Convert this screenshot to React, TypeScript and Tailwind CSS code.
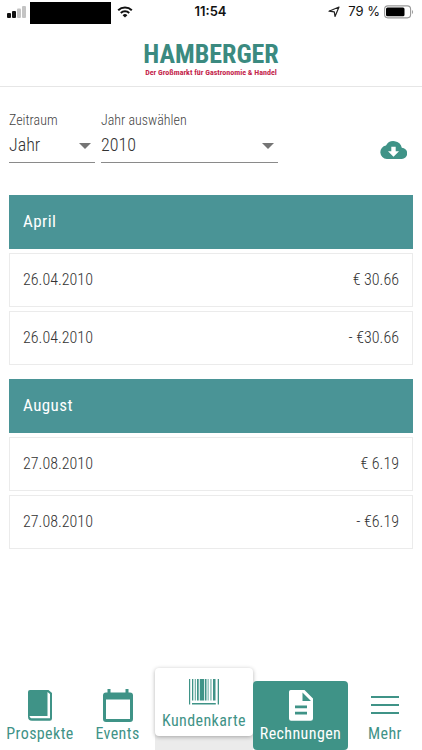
import React from 'react';

type Invoice = { date: string; amount: string };
type Month = { name: string; invoices: Invoice[] };

const MONTHS: Month[] = [
  {
    name: 'April',
    invoices: [
      { date: '26.04.2010', amount: '€ 30.66' },
      { date: '26.04.2010', amount: '- €30.66' },
    ],
  },
  {
    name: 'August',
    invoices: [
      { date: '27.08.2010', amount: '€ 6.19' },
      { date: '27.08.2010', amount: '- €6.19' },
    ],
  },
];

const SignalIcon = () => (
  <svg width="20" height="12" viewBox="0 0 20 12" aria-hidden="true">
    <rect x="0" y="7" width="4" height="5" rx="1" fill="#111" />
    <rect x="5" y="5" width="4" height="7" rx="1" fill="#111" />
    <rect x="10" y="2.500" width="4" height="9.500" rx="1" fill="#c4c4c4" />
    <rect x="15" y="0" width="4" height="12" rx="1" fill="#c4c4c4" />
  </svg>
);

const WifiIcon = () => (
  <svg width="16" height="12" viewBox="0 0 16 12" aria-hidden="true">
    <path d="M1.200 4.300a9.800 9.800 0 0 1 13.600 0" fill="none" stroke="#111" strokeWidth="2" />
    <path d="M3.800 7a6 6 0 0 1 8.400 0" fill="none" stroke="#111" strokeWidth="2" />
    <path d="M8 11.600 5.600 9.200a3.400 3.400 0 0 1 4.800 0z" fill="#111" />
  </svg>
);

const LocationIcon = () => (
  <svg width="12" height="12" viewBox="0 0 12 12" aria-hidden="true">
    <path d="M11 1 7 10.500 6.300 5.800 1 5.200z" fill="none" stroke="#222" strokeWidth="1.200" strokeLinejoin="round" />
  </svg>
);

const BatteryIcon = () => (
  <svg width="30" height="14" viewBox="0 0 30 14" aria-hidden="true">
    <rect x="0.600" y="0.900" width="26" height="12" rx="3.300" fill="none" stroke="#999" strokeWidth="1.100" />
    <rect x="2" y="2.500" width="18.500" height="8.800" rx="1.500" fill="#000" />
    <path d="M28 5v4c1.400-.6 1.400-3.400 0-4z" fill="#999" />
  </svg>
);

const CloudDownloadIcon = () => (
  <svg width="27" height="18" viewBox="0 0 27 18" aria-hidden="true">
    <path
      d="M21.800 6.800A8.500 8.500 0 0 0 6 4.500 6.800 6.800 0 0 0 6.800 18h14.600a5.600 5.600 0 0 0 .4-11.200z"
      fill="#3f9387"
    />
    <path d="M11.300 5.800h4.400v4.400H19l-5.500 5.500L8 10.200h3.300z" fill="#fff" />
  </svg>
);

const BookIcon = () => (
  <svg width="24" height="31" viewBox="0 0 24 31" aria-hidden="true">
    <path
      d="M2 0h18.500l3.500 3v25.500a2.200 2.200 0 0 1-2.200 2.200H4A4 4 0 0 1 0 26.700V2a2 2 0 0 1 2-2z"
      fill="#3f9387"
    />
    <path d="M19.500 2 22 4v24.300H4.300c-1.500 0-2.500-.9-2.800-2.300h18z" fill="#fff" />
  </svg>
);

const CalendarIcon = () => (
  <svg width="30" height="33" viewBox="0 0 30 33" aria-hidden="true">
    <path
      fillRule="evenodd"
      d="M4.500 0h3v3.500h15V0h3v3.500H27a3 3 0 0 1 3 3V30a3 3 0 0 1-3 3H3a3 3 0 0 1-3-3V6.500a3 3 0 0 1 3-3h1.500zM3 10.500V30h24V10.500z"
      fill="#3f9387"
    />
  </svg>
);

const BarcodeIcon = () => (
  <svg width="30" height="26" viewBox="0 0 30 26" fill="#3f9387" aria-hidden="true">
    <path d="M0 0h1.200v25.500H0zM3 0h1.300v21.500H3zM5.800 0h.9v21.500h-.9zM8 0h1.700v21.500H8zM10.800 0h4.400v21.500h-4.400zM16 0h1.500v21.500H16zM18.700 0h.8v21.500h-.8zM21.500 0h.9v21.500h-.9zM24 0h2.500v21.500H24zM28.700 0H30v25.500h-1.300zM3 24h23.800v1.400H3z" />
  </svg>
);

const DocumentIcon = () => (
  <svg width="24" height="31" viewBox="0 0 24 31" aria-hidden="true">
    <path d="M2.500 0h13L24 8.500v20a2.300 2.300 0 0 1-2.300 2.300H2.500A2.300 2.300 0 0 1 0 28.500v-26A2.300 2.300 0 0 1 2.500 0z" fill="#fff" />
    <path d="M13.500 2.500V11H22zM6 15.500h12v2.700H6zM6 21.700h12v2.700H6z" fill="#3f9387" />
  </svg>
);

const MenuIcon = () => (
  <svg width="28" height="20" viewBox="0 0 28 20" aria-hidden="true">
    <path d="M0 1h28v2H0zM0 9h28v2H0zM0 17h28v2H0z" fill="#3f9387" />
  </svg>
);

type SelectFieldProps = { id: string; label: string; options: string[]; className: string };

const SelectField: React.FC<SelectFieldProps> = ({ id, label, options, className }) => (
  <div className={className}>
    <label htmlFor={id} className="block text-sm leading-4 font-light text-[#444]">
      {label}
    </label>
    <div className="relative mt-1">
      <select
        id={id}
        className="block h-[31px] w-full appearance-none rounded-none border-b border-[#8a8a8a] bg-transparent pb-1 text-lg leading-6 font-light text-[#333] outline-none"
      >
        {options.map((option) => (
          <option key={option}>{option}</option>
        ))}
      </select>
      <svg className="pointer-events-none absolute top-[11px] right-1" width="12" height="6" viewBox="0 0 12 6" aria-hidden="true">
        <path d="M0 0h12L6 6z" fill="#757575" />
      </svg>
    </div>
  </div>
);

type NavItemProps = { label: string; icon: React.ReactNode; className: string };

const NavItem: React.FC<NavItemProps> = ({ label, icon, className }) => (
  <a href="#" className={`flex flex-col items-center ${className}`}>
    <span className="flex h-9 items-center">{icon}</span>
    <span className="mt-[3px] text-base leading-4 tracking-wide whitespace-nowrap">{label}</span>
  </a>
);

const App: React.FC = () => {
  return (
    <div className="flex min-h-screen flex-col bg-white font-['Roboto_Condensed','Liberation_Sans_Narrow',Roboto,sans-serif]">
      {/* Status bar */}
      <div className="grid h-6 grid-cols-[1fr_auto_1fr] items-center pr-2 pl-[7px] font-[Inter,sans-serif] text-[13px] text-[#111]">
        <div className="flex items-center gap-[3px]">
          <SignalIcon />
          <span className="mt-[2px] h-[22px] w-[81px] bg-black" />
          <span className="pl-[3px]">
            <WifiIcon />
          </span>
        </div>
        <span className="font-semibold">11:54</span>
        <div className="flex items-center justify-end gap-1">
          <LocationIcon />
          <span className="pl-1">79 %</span>
          <BatteryIcon />
        </div>
      </div>

      {/* Brand */}
      <header className="flex h-[63px] flex-col items-center border-b border-[#e6e6e6] pt-[15px]">
        <span className="text-[26px] leading-[30px] font-bold text-[#3b8a80]">HAMBERGER</span>
        <span className="text-[8px] leading-[8px] font-bold text-[#c4264c]">Der Großmarkt für Gastronomie &amp; Handel</span>
      </header>

      <main className="flex-1 px-[9px]">
        <form className="flex items-end gap-[6px] pt-[25px]">
          <SelectField id="period" label="Zeitraum" options={['Jahr']} className="w-[86px]" />
          <SelectField id="year" label="Jahr auswählen" options={['2010']} className="w-[177px]" />
          <button type="button" aria-label="Download" className="mr-[6px] mb-1 ml-auto">
            <CloudDownloadIcon />
          </button>
        </form>

        <div className="mt-8 flex flex-col gap-[14px]">
          {MONTHS.map((month) => (
            <section key={month.name}>
              <h2 className="flex h-[54px] items-center bg-[#4a9496] px-[14px] text-[17px] tracking-wide text-white">{month.name}</h2>
              <ul className="mt-1 flex flex-col gap-1">
                {month.invoices.map((invoice, idx) => (
                  <li
                    key={idx}
                    className="flex h-[54px] items-center justify-between border border-[#ebebeb] px-[13px] text-base font-light text-[#333]"
                  >
                    <span>{invoice.date}</span>
                    <span>{invoice.amount}</span>
                  </li>
                ))}
              </ul>
            </section>
          ))}
        </div>
      </main>

      {/* Tab bar */}
      <nav className="flex h-[69px] text-[#3f9387]">
        <NavItem label="Prospekte" icon={<BookIcon />} className="flex-[80] pt-[6px]" />
        <NavItem label="Events" icon={<CalendarIcon />} className="flex-[75] pt-[6px]" />
        <div className="flex-[98] bg-[#ebebeb]">
          <NavItem
            label="Kundenkarte"
            icon={<BarcodeIcon />}
            className="-mt-[13px] h-[68px] rounded bg-white pt-[6px] shadow-[0_1px_4px_rgba(0,0,0,0.3)]"
          />
        </div>
        <NavItem label="Rechnungen" icon={<DocumentIcon />} className="flex-[95] rounded bg-[#3f9387] pt-[6px] text-white" />
        <NavItem label="Mehr" icon={<MenuIcon />} className="flex-[74] pt-[6px]" />
      </nav>
    </div>
  );
};

export default App;
